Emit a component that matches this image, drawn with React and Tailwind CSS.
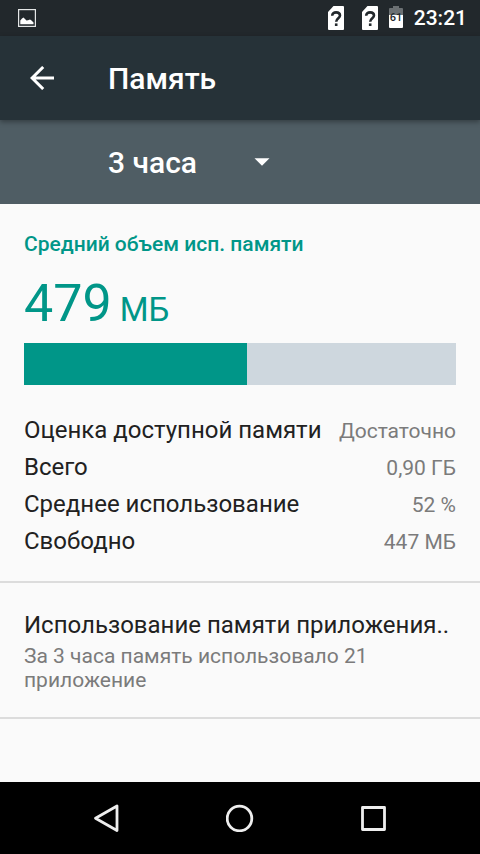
import React from "react";

function SimUnknownIcon() {
  return (
    <svg width="16" height="24" viewBox="0 0 16 24" aria-hidden="true">
      <path d="M5.5 0H15Q16 0 16 1V23Q16 24 15 24H1Q0 24 0 23V6Z" fill="#fff" />
      <path
        d="M4.2 9.8C4.2 7.6 5.8 6.4 8.1 6.4S12 7.6 12 9.6C12 12.2 8.2 12.4 8.2 15.8"
        fill="none"
        stroke="#22282c"
        strokeWidth="2.6"
      />
      <rect x="6.9" y="17.4" width="2.6" height="2.6" fill="#22282c" />
    </svg>
  );
}

function BatteryIcon() {
  return (
    <svg width="14" height="22" viewBox="0 0 14 22" aria-label="61" role="img">
      <path d="M4 0H10V2H13Q14 2 14 3V9H0V3Q0 2 1 2H4Z" fill="#6b7073" />
      <path d="M0 9H14V21Q14 22 13 22H1Q0 22 0 21Z" fill="#fff" />
      <text
        x="7"
        y="15"
        textAnchor="middle"
        fontSize="11"
        fontWeight="500"
        fill="#22282c"
      >
        61
      </text>
    </svg>
  );
}

function StatusBar() {
  return (
    <div className="flex h-9 items-center justify-between bg-[#22282c] pr-[13px] pl-[18px] text-white">
      <svg width="18" height="18" viewBox="0 0 18 18" aria-hidden="true">
        <rect x="0.6" y="0.6" width="16.8" height="16.8" fill="none" stroke="#e4e6e7" strokeWidth="1.2" />
        <path d="M2.3 15.2V11.5L4 9.5L5.5 8.6L7 10L8.5 11.6L10 11.3L12 10.6L13.5 11.5L15.5 13.5V15.2Z" fill="#fff" />
      </svg>
      <div className="flex items-center">
        <div className="flex gap-[18px]">
          <SimUnknownIcon />
          <SimUnknownIcon />
        </div>
        <div className="mx-[11px] pb-0.5">
          <BatteryIcon />
        </div>
        <span className="text-[21px] leading-9 font-medium">23:21</span>
      </div>
    </div>
  );
}

const rows = [
  ["Оценка доступной памяти", "Достаточно"],
  ["Всего", "0,90 ГБ"],
  ["Среднее использование", "52 %"],
  ["Свободно", "447 МБ"],
];

export default function App() {
  return (
    <div className="flex min-h-screen flex-col bg-[#fafafa] font-[Roboto,sans-serif] text-[#212121]">
      <StatusBar />
      <header className="z-10 flex h-[84px] items-center bg-[#263238] pl-6 text-white shadow-[0_2px_5px_rgba(0,0,0,0.35)]">
        <button type="button" aria-label="Назад" className="flex size-9 items-center justify-center">
          <svg width="24" height="24" viewBox="0 0 24 24" fill="none" stroke="#fff" strokeWidth="3" aria-hidden="true">
            <path d="M24 12H2M13.2 1L2.1 12L13.2 23" />
          </svg>
        </button>
        <h1 className="ml-12 pt-0.5 text-[30px] leading-9 font-medium">Память</h1>
      </header>
      <div className="flex h-[84px] items-center bg-[#4f5d64] pl-[108px] text-white">
        <div className="grid w-[162px] grid-cols-1 items-center">
          <select
            aria-label="Период"
            defaultValue="3"
            className="col-start-1 row-start-1 h-14 appearance-none bg-transparent text-[30px] font-medium"
          >
            <option value="3">3 часа</option>
          </select>
          <svg
            className="pointer-events-none col-start-1 row-start-1 justify-self-end"
            width="16"
            height="8"
            viewBox="0 0 16 8"
            aria-hidden="true"
          >
            <path d="M0.5 0.2H15.5L8 7.8Z" fill="#fff" />
          </svg>
        </div>
      </div>
      <main className="flex-1">
        <section className="border-b-2 border-[#dcdcdc] px-6 pt-7 pb-[21px]">
          <h2 className="text-[21px] leading-6 font-medium text-[#009688]">Средний объем исп. памяти</h2>
          <p className="mt-[18px] text-[52px] leading-[60px] text-[#009688]">
            479<span className="ml-2 text-[33px] leading-none">МБ</span>
          </p>
          <div
            className="mt-[9px] h-[42px] bg-[#ced7de]"
            role="img"
            aria-label="52 %"
          >
            <div className="h-full bg-[#009688]" style={{ width: "51.7%" }} />
          </div>
          <dl className="mt-[27px]">
            {rows.map(([name, value]) => (
              <div key={name} className="flex h-[37px] items-baseline justify-between">
                <dt className="text-[24px] leading-9">{name}</dt>
                <dd className="text-[21px] leading-9 text-[#7b7b7b]">{value}</dd>
              </div>
            ))}
          </dl>
        </section>
        <a href="#apps" className="block border-b-2 border-[#dcdcdc] px-6 pt-6 pb-[25px]">
          <span className="block overflow-hidden text-[24px] leading-[37px] whitespace-nowrap">
            Использование памяти приложения..
          </span>
          <span className="block text-[21px] leading-6 text-[#7b7b7b]">
            За 3 часа память использовало 21 приложение
          </span>
        </a>
      </main>
      <nav className="flex h-[72px] bg-black px-[39px]">
        <button type="button" aria-label="Назад" className="flex flex-1 items-center justify-center">
          <svg width="28" height="28" viewBox="0 0 28 28" fill="none" stroke="#eee" strokeWidth="2.8" strokeLinejoin="round" aria-hidden="true">
            <path d="M25 2V26.5L3.5 14.3Z" />
          </svg>
        </button>
        <button type="button" aria-label="Домой" className="flex flex-1 items-center justify-center">
          <svg width="28" height="28" viewBox="0 0 28 28" fill="none" stroke="#eee" strokeWidth="2.8" aria-hidden="true">
            <circle cx="13.5" cy="14.5" r="12.3" />
          </svg>
        </button>
        <button type="button" aria-label="Обзор" className="flex flex-1 items-center justify-center">
          <svg width="28" height="28" viewBox="0 0 28 28" fill="none" stroke="#eee" strokeWidth="2.8" strokeLinejoin="round" aria-hidden="true">
            <rect x="2.5" y="3.5" width="22" height="22" />
          </svg>
        </button>
      </nav>
    </div>
  );
}
